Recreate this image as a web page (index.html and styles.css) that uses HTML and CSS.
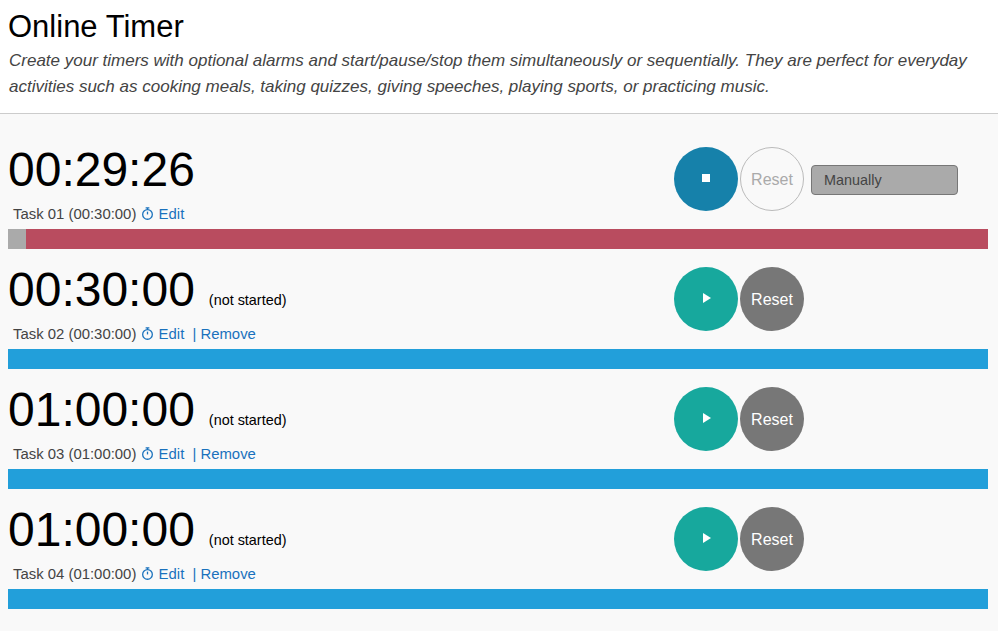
FILE: index.html
```html
<!DOCTYPE html>
<html>

<head>
    <title>Online Timer</title>
    <link rel="stylesheet" href="styles.css">
</head>

<body>
    <div class="page-header">
        <h1>Online Timer</h1>
        <p>Create your timers with optional alarms and start/pause/stop them simultaneously or sequentially. They are perfect for everyday activities such as cooking meals, taking quizzes, giving speeches, playing sports, or practicing music.</p>
    </div>
    <div class="timer-list">
        <div class="timer">
            <div class="timer-row">
                <div class="timer-info">
                    <div class="timer-clock">00:29:26</div>
                    <div class="timer-task">
                        Task 01 (00:30:00)
                        <a href="#" class="task-link"><svg class="clock-icon" viewBox="0 0 14 14"><path d="M5 1h4M7 1v2"/><circle cx="7" cy="8" r="5.2"/><path d="M7 5v3"/></svg> Edit</a>
                    </div>
                </div>
                <div class="timer-controls">
                    <button class="round-btn btn-stop"><span class="stop-icon"></span></button>
                    <button class="round-btn btn-reset-off">Reset</button>
                    <div class="start-select">Manually</div>
                </div>
            </div>
            <div class="progress progress-running"><div class="progress-done" style="width: 18px"></div></div>
        </div>
        <div class="timer">
            <div class="timer-row">
                <div class="timer-info">
                    <div class="timer-clock">00:30:00<span class="timer-status">(not started)</span></div>
                    <div class="timer-task">
                        Task 02 (00:30:00)
                        <a href="#" class="task-link"><svg class="clock-icon" viewBox="0 0 14 14"><path d="M5 1h4M7 1v2"/><circle cx="7" cy="8" r="5.2"/><path d="M7 5v3"/></svg> Edit</a>
                        <a href="#" class="task-link task-remove">| Remove</a>
                    </div>
                </div>
                <div class="timer-controls">
                    <button class="round-btn btn-play"><span class="play-icon"></span></button>
                    <button class="round-btn btn-reset">Reset</button>
                </div>
            </div>
            <div class="progress"></div>
        </div>
        <div class="timer">
            <div class="timer-row">
                <div class="timer-info">
                    <div class="timer-clock">01:00:00<span class="timer-status">(not started)</span></div>
                    <div class="timer-task">
                        Task 03 (01:00:00)
                        <a href="#" class="task-link"><svg class="clock-icon" viewBox="0 0 14 14"><path d="M5 1h4M7 1v2"/><circle cx="7" cy="8" r="5.2"/><path d="M7 5v3"/></svg> Edit</a>
                        <a href="#" class="task-link task-remove">| Remove</a>
                    </div>
                </div>
                <div class="timer-controls">
                    <button class="round-btn btn-play"><span class="play-icon"></span></button>
                    <button class="round-btn btn-reset">Reset</button>
                </div>
            </div>
            <div class="progress"></div>
        </div>
        <div class="timer">
            <div class="timer-row">
                <div class="timer-info">
                    <div class="timer-clock">01:00:00<span class="timer-status">(not started)</span></div>
                    <div class="timer-task">
                        Task 04 (01:00:00)
                        <a href="#" class="task-link"><svg class="clock-icon" viewBox="0 0 14 14"><path d="M5 1h4M7 1v2"/><circle cx="7" cy="8" r="5.2"/><path d="M7 5v3"/></svg> Edit</a>
                        <a href="#" class="task-link task-remove">| Remove</a>
                    </div>
                </div>
                <div class="timer-controls">
                    <button class="round-btn btn-play"><span class="play-icon"></span></button>
                    <button class="round-btn btn-reset">Reset</button>
                </div>
            </div>
            <div class="progress"></div>
        </div>
    </div>
</body>

</html>
```

FILE: styles.css
```css
html, body {
    height: 100%;
}

body {
    margin: 0;
    overflow: hidden;
    background-color: #f9f9f9;
    color: #000;
    font-family: "Liberation Sans", Arial, sans-serif;
}

.page-header {
    box-sizing: border-box;
    height: 114px;
    padding: 9px 8px 0 8px;
    background-color: #fff;
    border-bottom: 1px solid #ccc;
}

.page-header h1 {
    margin: 0;
    font-size: 31px;
    font-weight: normal;
    line-height: 36px;
}

.page-header p {
    margin: 3px 0 0 1px;
    font-size: 17px;
    font-style: italic;
    line-height: 26px;
    color: #444;
}

.timer-list {
    padding: 15px 10px 0 8px;
}

.timer-row {
    display: flex;
    height: 100px;
}

.timer-info {
    width: 666px;
    padding-top: 13px;
}

.timer-clock {
    height: 56px;
    font-size: 48px;
    line-height: 56px;
    white-space: nowrap;
}

.timer-status {
    margin-left: 14px;
    font-size: 14.4px;
    line-height: 20px;
    vertical-align: 1px;
}

.timer-task {
    margin-top: 6px;
    padding-left: 5px;
    font-size: 14.9px;
    line-height: 20px;
    color: #444;
}

.task-link {
    color: #1a72bd;
    text-decoration: none;
}

.task-remove {
    margin-left: 4px;
}

.clock-icon {
    width: 13px;
    height: 13px;
    margin-left: 1px;
    vertical-align: -1px;
    fill: none;
    stroke: #1a72bd;
    stroke-width: 1.4;
}

.timer-controls {
    display: flex;
    align-items: flex-start;
    gap: 2px;
    padding-top: 18px;
}

.round-btn {
    display: flex;
    align-items: center;
    justify-content: center;
    width: 64px;
    height: 64px;
    padding: 0;
    border: 0;
    border-radius: 50%;
    font-family: inherit;
    font-size: 16px;
}

.btn-stop {
    background-color: #1681aa;
}

.btn-play {
    background-color: #17a89d;
}

.btn-reset {
    padding-top: 2px;
    background-color: #777;
    color: #fff;
}

.btn-reset-off {
    padding-top: 2px;
    background-color: transparent;
    border: 1px solid #bbb;
    color: #aaa;
}

.stop-icon {
    width: 8px;
    height: 8px;
    margin-bottom: 2px;
    background-color: #fff;
}

.play-icon {
    width: 0;
    height: 0;
    margin: 0 0 2px 2px;
    border-left: 8px solid #fff;
    border-top: 5px solid transparent;
    border-bottom: 5px solid transparent;
}

.start-select {
    width: 147px;
    height: 30px;
    box-sizing: border-box;
    margin: 18px 0 0 5px;
    padding-left: 12px;
    background-color: #aaa;
    border: 1px solid #777;
    border-radius: 4px;
    font-size: 14.4px;
    line-height: 28px;
    color: #444;
}

.progress {
    height: 20px;
    background-color: #229fda;
}

.progress-running {
    background-color: #b94c5f;
}

.progress-done {
    height: 100%;
    background-color: #aaa;
}
```
